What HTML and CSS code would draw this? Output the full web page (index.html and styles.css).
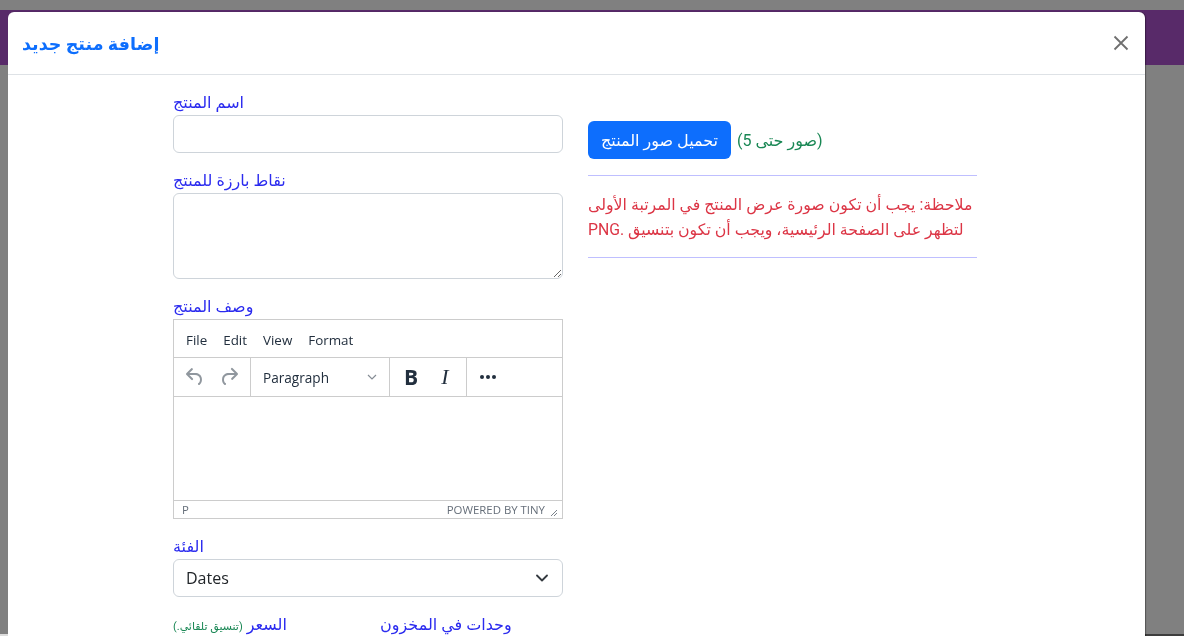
FILE: index.html
```html
<!DOCTYPE html>
<html lang="ar">
<head>
<meta charset="utf-8">
<title>إضافة منتج جديد</title>
<link rel="stylesheet" href="styles.css">
</head>
<body>
<div class="page">
  <div class="navbar"></div>
</div>
<div class="scrollbar"><span class="track-left"></span></div>

<div class="modal">
  <div class="modal-header">
    <h5 class="modal-title">إضافة منتج جديد</h5>
    <button class="btn-close" type="button" aria-label="Close">
      <svg width="16" height="16" viewBox="0 0 16 16"><path d="M1.5 1.5L14.5 14.5M14.5 1.5L1.5 14.5" stroke="#6f6f6f" stroke-width="1.8" fill="none"/></svg>
    </button>
  </div>
  <div class="modal-body">
    <div class="form-grid">
      <div class="col-left">
        <div class="field">
          <label class="form-label">اسم المنتج</label>
          <input class="form-control" type="text">
        </div>
        <div class="field">
          <label class="form-label">نقاط بارزة للمنتج</label>
          <textarea class="form-control textarea"></textarea>
        </div>
        <div class="field">
          <label class="form-label">وصف المنتج</label>
          <div class="editor">
            <div class="menubar">
              <span class="menu-item">File</span>
              <span class="menu-item">Edit</span>
              <span class="menu-item">View</span>
              <span class="menu-item">Format</span>
            </div>
            <div class="toolbar">
              <div class="tb-group">
                <span class="tb-btn">
                  <svg width="24" height="24" viewBox="0 0 24 24"><path d="M6.4 8H12c3.7 0 6.2 2 6.8 5.1.6 2.7-.4 5.6-2.3 6.8a1 1 0 0 1-1-1.8c1.1-.6 1.8-2.7 1.4-4.6-.5-2.1-2.1-3.5-4.9-3.5H6.4l3.3 3.3a1 1 0 1 1-1.4 1.4l-5-5a1 1 0 0 1 0-1.4l5-5a1 1 0 0 1 1.4 1.4L6.4 8Z" fill="#222f3e" fill-opacity=".5"/></svg>
                </span>
                <span class="tb-btn">
                  <svg width="24" height="24" viewBox="0 0 24 24"><path d="M17.6 10H12c-2.8 0-4.4 1.4-4.9 3.5-.4 2 .3 4 1.4 4.6a1 1 0 1 1-1 1.8c-2-1.2-2.9-4.1-2.3-6.8.6-3 3-5.1 6.8-5.1h5.6l-3.3-3.3a1 1 0 1 1 1.4-1.4l5 5a1 1 0 0 1 0 1.4l-5 5a1 1 0 0 1-1.4-1.4l3.3-3.3Z" fill="#222f3e" fill-opacity=".5"/></svg>
                </span>
              </div>
              <div class="tb-group">
                <span class="tb-select">
                  <span class="tb-select-label">Paragraph</span>
                  <svg width="10" height="6" viewBox="0 0 10 6"><path d="M1 1l4 4 4-4" stroke="#222f3e" stroke-opacity=".55" stroke-width="1.2" fill="none"/></svg>
                </span>
              </div>
              <div class="tb-group">
                <span class="tb-btn tb-bold">B</span>
                <span class="tb-btn tb-italic">I</span>
              </div>
              <div class="tb-group">
                <span class="tb-btn">
                  <svg width="24" height="24" viewBox="0 0 24 24"><circle cx="6" cy="12" r="2" fill="#222f3e"/><circle cx="12" cy="12" r="2" fill="#222f3e"/><circle cx="18" cy="12" r="2" fill="#222f3e"/></svg>
                </span>
              </div>
            </div>
            <div class="edit-area"></div>
            <div class="statusbar">
              <span class="path">P</span>
              <span class="branding">POWERED BY TINY</span>
              <svg class="grip" width="10" height="10" viewBox="0 0 10 10"><path d="M9 3L3 9M9 6L6 9" stroke="#222f3e" stroke-opacity=".6" stroke-width="1" fill="none"/></svg>
            </div>
          </div>
        </div>
        <div class="field">
          <label class="form-label">الفئة</label>
          <div class="select">
            <span class="select-value">Dates</span>
            <svg width="12" height="8" viewBox="0 0 12 8"><path d="M1 1.5l5 5 5-5" stroke="#343a40" stroke-width="1.8" stroke-linecap="round" stroke-linejoin="round" fill="none"/></svg>
          </div>
        </div>
        <div class="split">
          <label class="form-label">السعر <small class="hint">(تنسيق تلقائي.)</small></label>
          <label class="form-label">وحدات في المخزون</label>
        </div>
      </div>

      <div class="col-right">
        <div class="upload-row">
          <button class="btn-primary" type="button">تحميل صور المنتج</button>
          <span class="upload-hint">(صور حتى 5)</span>
        </div>
        <hr class="rule">
        <p class="note" dir="rtl">ملاحظة: يجب أن تكون صورة عرض المنتج في المرتبة الأولى لتظهر على الصفحة الرئيسية، ويجب أن تكون بتنسيق .PNG</p>
        <hr class="rule">
      </div>
    </div>
  </div>
</div>
</body>
</html>
```

FILE: styles.css
```css
* { box-sizing: border-box; }

html, body {
  margin: 0;
  padding: 0;
  height: 100%;
  overflow: hidden;
}

body {
  background: #808080;
  font-family: Roboto, "DejaVu Sans", sans-serif;
  font-size: 16px;
  color: #212529;
}

.page {
  padding-top: 10px;
}

.navbar {
  height: 55px;
  background: #582a69;
}

.scrollbar {
  position: fixed;
  left: 0;
  right: 0;
  bottom: 0;
  height: 2px;
  background: #3d3d3d;
}

.track-left {
  display: block;
  width: 105px;
  height: 2px;
  background: #dcdcdc;
}

.modal {
  position: absolute;
  left: 8px;
  top: 12px;
  width: 1137px;
  height: 700px;
  background: #fff;
  border-radius: 6px;
  box-shadow: 1px 0 1px rgba(0,0,0,.35);
}

.modal-header {
  display: flex;
  align-items: center;
  justify-content: space-between;
  height: 63px;
  padding: 0 14px 0 14px;
  border-bottom: 1px solid #dee2e6;
}

.modal-title {
  margin: 0;
  font-size: 17.5px;
  font-weight: 700;
  color: #0d6efd;
  line-height: 1.5;
  padding-top: 2px;
}

.btn-close {
  border: 0;
  background: transparent;
  padding: 0;
  margin-right: 2px;
  width: 16px;
  height: 16px;
  display: flex;
}

.modal-body {
  padding: 16px 16px 0 165px;
}

.form-grid {
  display: grid;
  grid-template-columns: 390px 389px;
  column-gap: 25px;
}

.field {
  margin-bottom: 16px;
}

.form-label {
  display: block;
  font-size: 16px;
  line-height: 24px;
  color: #2b2bef;
}

.form-control {
  display: block;
  width: 100%;
  height: 38px;
  border: 1px solid #ced4da;
  border-radius: 6px;
  font-size: 16px;
  padding: 6px 12px;
  background: #fff;
}

.textarea {
  height: 86px;
  resize: vertical;
}

.editor {
  border: 1px solid #cccccc;
  height: 200px;
  display: flex;
  flex-direction: column;
  font-family: "Open Sans", "DejaVu Sans", sans-serif;
  color: #222f3e;
}

.menubar {
  display: flex;
  align-items: center;
  height: 38px;
  padding: 3px 4px 0;
  border-bottom: 1px solid #cccccc;
}

.menu-item {
  font-size: 13.4px;
  padding: 0 8px;
  line-height: 24px;
}

.toolbar {
  display: flex;
  height: 39px;
  border-bottom: 1px solid #cccccc;
}

.tb-group {
  display: flex;
  align-items: center;
  padding: 0 4px;
  border-right: 1px solid #cccccc;
}

.tb-group:last-child {
  border-right: 0;
}

.tb-btn {
  width: 34px;
  height: 34px;
  display: flex;
  align-items: center;
  justify-content: center;
}

.tb-bold {
  font-family: "Open Sans", "DejaVu Sans", sans-serif;
  font-weight: 700;
  font-size: 21px;
}

.tb-italic {
  font-family: "Liberation Serif", "DejaVu Serif", serif;
  font-style: italic;
  font-size: 22px;
}

.tb-select {
  display: flex;
  align-items: center;
  justify-content: space-between;
  width: 130px;
  height: 34px;
  padding: 0 8px 0 8px;
  font-size: 13.6px;
}

.edit-area {
  flex: 1;
}

.statusbar {
  display: flex;
  align-items: center;
  height: 18px;
  border-top: 1px solid #cccccc;
  padding: 0 4px 0 8px;
  font-size: 11.4px;
  color: rgba(34,47,62,.7);
}

.path {
  flex: 1;
}

.branding {
  margin-right: 3px;
}

.grip {
  margin-top: 4px;
}

.select {
  display: flex;
  align-items: center;
  justify-content: space-between;
  height: 38px;
  border: 1px solid #ced4da;
  border-radius: 6px;
  padding: 0 14px 0 12px;
  font-family: "Open Sans", "DejaVu Sans", sans-serif;
  font-size: 16px;
  color: #212529;
}

.split {
  display: grid;
  grid-template-columns: 1fr 1fr;
  column-gap: 24px;
}

.hint {
  font-size: 11px;
  color: #198754;
}

.col-right {
  padding-top: 30px;
}

.upload-row {
  display: flex;
  align-items: center;
  gap: 6px;
}

.btn-primary {
  background: #0d6efd;
  color: #fff;
  border: 0;
  border-radius: 6px;
  font-family: inherit;
  font-size: 16px;
  height: 38px;
  padding: 0 12px;
  width: 143px;
}

.upload-hint {
  color: #198754;
  font-size: 16px;
}

.rule {
  border: 0;
  border-top: 1px solid #0000ff;
  opacity: .25;
  margin: 16px 0;
}

.note {
  margin: 0 0 -1px;
  color: #dc3545;
  font-size: 15.8px;
  line-height: 25px;
  text-align: left;
}
```
